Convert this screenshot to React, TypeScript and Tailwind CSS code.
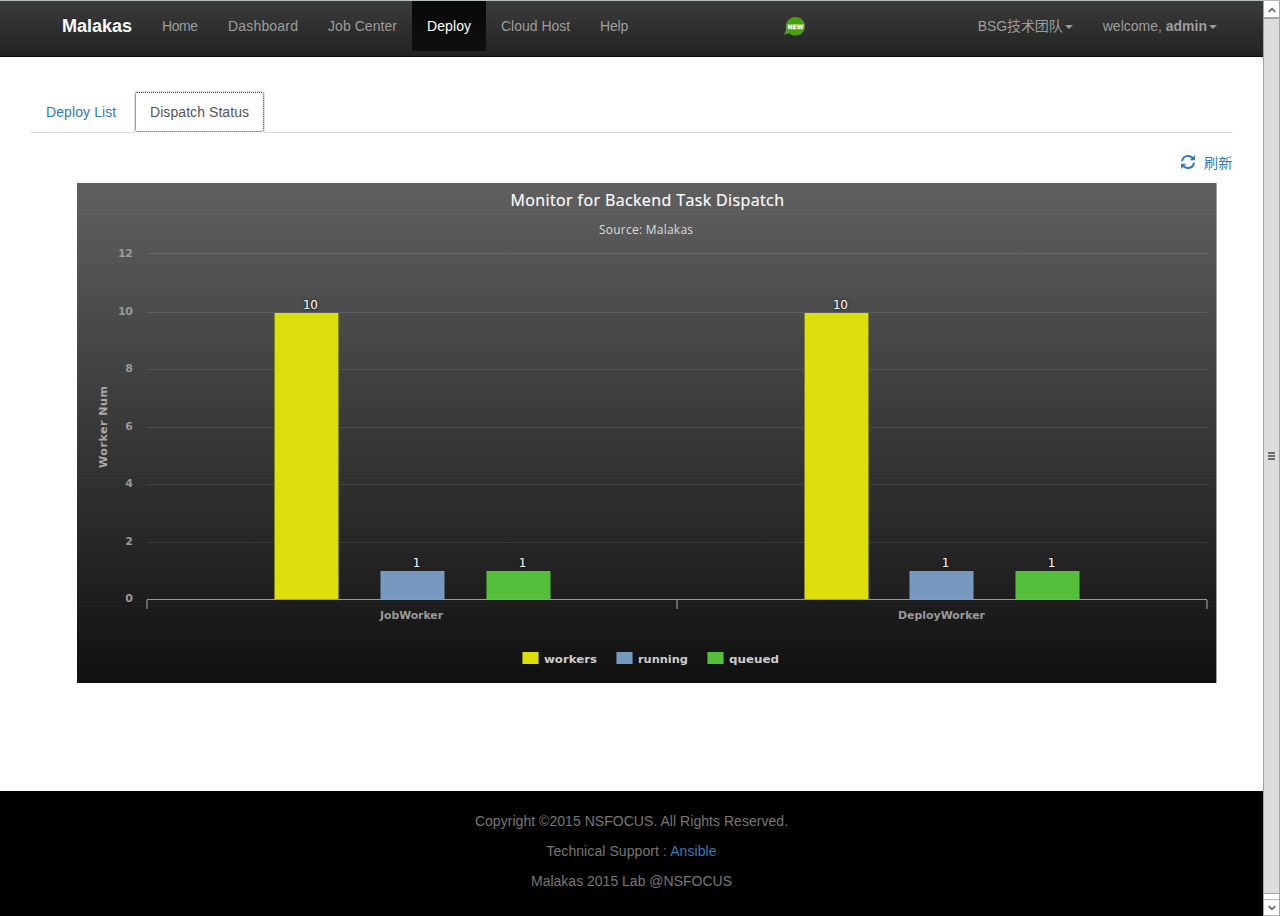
const navItems = [
  { label: "Home", box: "w-[66px]", len: "tracking-[-0.4px]" },
  { label: "Dashboard", box: "w-[100px]", len: "tracking-[0.18px]" },
  { label: "Job Center", box: "w-[99px]", len: "tracking-[0.05px]" },
  { label: "Deploy", box: "w-[74px]", len: "tracking-[0.1px]", active: true },
  { label: "Cloud Host", box: "w-[99px]", len: "" },
  { label: "Help", box: "w-[58px]", len: "tracking-[-0.2px]" },
];

const ticks = [
  { label: "12", y: 253.5 },
  { label: "10", y: 312.5 },
  { label: "8", y: 369.5 },
  { label: "6", y: 427.5 },
  { label: "4", y: 484.5 },
  { label: "2", y: 542.5 },
];

const bars = [
  { x: 274, top: 313, value: "10", label: 310.5, fill: "#DDDF0D", edge: "#85861a" },
  { x: 380, top: 571, value: "1", label: 416.5, fill: "#7798BF", edge: "#4d5f75" },
  { x: 486, top: 571, value: "1", label: 522.5, fill: "#55BF3B", edge: "#3b7330" },
  { x: 804, top: 313, value: "10", label: 840.5, fill: "#DDDF0D", edge: "#85861a" },
  { x: 909, top: 571, value: "1", label: 945.5, fill: "#7798BF", edge: "#4d5f75" },
  { x: 1015, top: 571, value: "1", label: 1051.5, fill: "#55BF3B", edge: "#3b7330" },
];

const legend = [
  { x: 522, text: 544, len: 53, label: "workers", fill: "#DDDF0D", edge: "#85861a" },
  { x: 616, text: 638, len: 50, label: "running", fill: "#7798BF", edge: "#4d5f75" },
  { x: 707, text: 729, len: 50, label: "queued", fill: "#55BF3B", edge: "#3b7330" },
];

function Caret() {
  return (
    <svg className="mt-px ml-[2px] h-1 w-2 shrink-0" viewBox="0 0 8 4">
      <path d="M0 0H8L4 4Z" fill="currentColor" />
    </svg>
  );
}

function RefreshIcon() {
  return (
    <svg className="h-[14px] w-[14px]" viewBox="0 0 14 14">
      <g fill="none" stroke="currentColor" strokeWidth="2">
        <path d="M1 6.2C1.600 3.200 4 1 7 1C9 1 10.400 1.700 11.700 3" />
        <path d="M13 7.800C12.400 10.800 10 13 7 13C5 13 3.600 12.300 2.300 11" />
      </g>
      <path d="M14 0V5.300H8.700Z" fill="currentColor" />
      <path d="M0 14V8.700H5.300Z" fill="currentColor" />
    </svg>
  );
}

function NewBadge() {
  return (
    <svg className="mt-4 ml-[141px] h-[19px] w-[22px]" viewBox="0 0 22 19">
      <path
        d="M11.5 .4C17.2 .4 20.700 4.500 20.700 9.300S17 18.300 11.500 18.300C9 18.300 7 17.500 5.300 16L.4 17.300L2.500 12.800C.8 6.500 4.700 .4 11.500 .4Z"
        fill="#46a30c"
        stroke="#7d9a6b"
        strokeWidth=".5"
      />
      <text x="3.500" y="12" textLength="16" lengthAdjust="spacingAndGlyphs" fontFamily="DejaVu Sans" fontSize="6" fontWeight="bold" fill="#fff" stroke="#fff" strokeWidth=".25">
        NEW
      </text>
    </svg>
  );
}

function Navbar() {
  return (
    <header className="flex h-[57px] items-start border-t border-b border-t-[#b8c0bd] border-b-[#080808] bg-linear-to-b from-[#3c3c3c] to-[#222] text-[14px] text-[#9d9d9d]">
      <div className="flex h-[50px] w-[147px] items-center pl-[62px] text-[18px] font-bold text-white [text-shadow:0_-1px_0_rgba(0,0,0,.25)]">
        Malakas
      </div>
      <nav className="flex">
        {navItems.map((item) => (
          <a
            key={item.label}
            className={`flex h-[50px] items-center pl-[15px] whitespace-nowrap ${item.box} ${item.len} ${
              item.active ? "bg-linear-to-b from-[#080808] to-[#0f0f0f] text-white" : ""
            }`}
          >
            {item.label}
          </a>
        ))}
      </nav>
      <NewBadge />
      <div className="ml-auto flex h-[50px] items-center pr-[46px] whitespace-nowrap">
        <a className="flex w-[125px] items-center">
          <span className="tracking-[-0.1px]">BSG技术团队</span>
          <Caret />
        </a>
        <a className="flex items-center">
          <span>
            welcome, <b>admin</b>
          </span>
          <Caret />
        </a>
      </div>
    </header>
  );
}

function Chart() {
  return (
    <svg className="mt-[10px] ml-[77px] block h-[500px] w-[1140px]" viewBox="77 183 1140 500" fontFamily="'Open Sans', 'Noto Sans', sans-serif">
      <defs>
        <linearGradient id="chartBg" x1="0" y1="0" x2="0" y2="1">
          <stop offset="0" stopColor="#606060" />
          <stop offset="1" stopColor="#101010" />
        </linearGradient>
      </defs>
      <rect x="77" y="183" width="1140" height="500" fill="url(#chartBg)" />
      <rect x="1216" y="183" width="1" height="500" fill="#a0a0a0" />
      <text x="510.500" y="206" fontSize="16" textLength="273.500" fill="#fff" stroke="#fff" strokeWidth=".2">Monitor for Backend Task Dispatch</text>
      <text x="599" y="234" fontSize="12" textLength="94" fill="#ddd">Source: Malakas</text>
      {ticks.map((t) => (
        <g key={t.label}>
          <path d={`M147 ${t.y}H1207`} stroke="#fff" strokeOpacity=".1" />
          <text x="133" y={t.label === "12" ? 257 : t.y + 2.5} fontSize="11" fontWeight="bold" textAnchor="end" textLength={t.label.length > 1 ? 15 : 8} fill="#999" fontFamily="DejaVu Sans">{t.label}</text>
        </g>
      ))}
      <text x="133" y="602" fontSize="11" fontWeight="bold" textAnchor="end" textLength="8" fill="#999" fontFamily="DejaVu Sans">0</text>
      <text transform="translate(107 468) rotate(-90)" fontSize="11" fontWeight="bold" textLength="82" fill="#aaa" fontFamily="DejaVu Sans">Worker Num</text>
      {bars.map((b) => (
        <g key={b.x}>
          <rect x={b.x} y={b.top} width="65" height={599 - b.top} fill={b.edge} />
          <rect x={b.x + 1} y={b.top} width="63" height={599 - b.top} fill={b.fill} />
          <text x={b.label} y={b.top - 4} fontSize="12" textAnchor="middle" textLength={b.value.length > 1 ? 15 : 7} fill="#fff" fontFamily="DejaVu Sans" className="[text-shadow:0_0_3px_#000]">{b.value}</text>
        </g>
      ))}
      <path d="M147 599.5H1207" stroke="#999" />
      <path d="M147 600V609M677 600V609M1207 600V609" stroke="#666" strokeWidth="2" />
      <text x="380" y="619" fontSize="11" fontWeight="bold" textLength="63" fill="#999" fontFamily="DejaVu Sans" lengthAdjust="spacingAndGlyphs">JobWorker</text>
      <text x="898" y="619" fontSize="11" fontWeight="bold" textLength="87" fill="#999" fontFamily="DejaVu Sans" lengthAdjust="spacingAndGlyphs">DeployWorker</text>
      {legend.map((l) => (
        <g key={l.label}>
          <rect x={l.x} y="652" width="17" height="12" fill={l.edge} />
          <rect x={l.x + 1} y="652" width="15" height="12" fill={l.fill} />
          <text x={l.text} y="663" fontSize="11" fontWeight="bold" textLength={l.len} fill="#ccc" fontFamily="DejaVu Sans" lengthAdjust="spacingAndGlyphs">{l.label}</text>
        </g>
      ))}
    </svg>
  );
}

function Scrollbar() {
  return (
    <aside className="flex h-[916px] w-[17px] flex-col border-t border-r border-l border-[#a5a5a5] border-t-[#b8b8b8] bg-white">
      <div className="mt-px flex h-[15px] items-center justify-center">
        <svg className="h-[6px] w-2" viewBox="0 0 8 6">
          <path d="M.7 5L4 1.700L7.300 5" fill="none" stroke="#606060" strokeWidth="1.700" />
        </svg>
      </div>
      <div className="flex h-[877px] flex-col items-center justify-center gap-px border-t-2 border-b border-[#a5a5a5] bg-[#dcdcdc]">
        <i className="h-[2px] w-[7px] bg-[#6d6d6d]" />
        <i className="h-[2px] w-[7px] bg-[#6d6d6d]" />
        <i className="h-[2px] w-[7px] bg-[#6d6d6d]" />
      </div>
      <div className="mt-[5px] flex h-[17px] items-center justify-center border-t border-b border-[#b8b8b8]">
        <svg className="h-[6px] w-2" viewBox="0 0 8 6">
          <path d="M.7 1L4 4.300L7.300 1" fill="none" stroke="#606060" strokeWidth="1.700" />
        </svg>
      </div>
    </aside>
  );
}

export default function App() {
  return (
    <div className="flex h-[916px] w-[1280px] overflow-hidden bg-white font-['Liberation_Sans','Noto_Sans_CJK_SC',sans-serif] text-[14px] leading-5">
      <div className="flex h-[916px] w-[1263px] flex-col">
        <Navbar />
        <main className="h-[734px]">
          <div className="mr-[30px] ml-[30px] flex h-[76px] items-end border-b border-[#ddd]">
            <a className="flex h-[41px] w-[104px] items-center pl-4 tracking-[0.1px] text-[#337ab7]">Deploy List</a>
            <a className="-mb-px flex h-[42px] w-[131px] items-start rounded-t-[3px] border border-b-0 border-[#ddd] bg-white">
              <span className="flex h-[40px] w-[129px] items-center rounded-[2px] border border-dotted border-[#444] pl-[14px] tracking-[0.07px] text-[#555]">Dispatch Status</span>
            </a>
          </div>
          <div className="mr-[29px] flex h-[40px] items-end justify-end text-[#337ab7]">
            <a className="flex h-5 items-center gap-[9px]">
              <span className="-mt-[2px]">
                <RefreshIcon />
              </span>
              <span className="w-[30px] tracking-[0.5px]">刷新</span>
            </a>
          </div>
          <Chart />
        </main>
        <footer className="flex h-[125px] flex-col items-center gap-[10px] bg-black pt-[20px] text-[#777]">
          <p className="tracking-[0.04px]">Copyright ©2015 NSFOCUS. All Rights Reserved.</p>
          <p className="tracking-[0.08px]">
            Technical Support : <a className="text-[#337ab7]">Ansible</a>
          </p>
          <p>Malakas 2015 Lab @NSFOCUS</p>
        </footer>
      </div>
      <Scrollbar />
    </div>
  );
}
